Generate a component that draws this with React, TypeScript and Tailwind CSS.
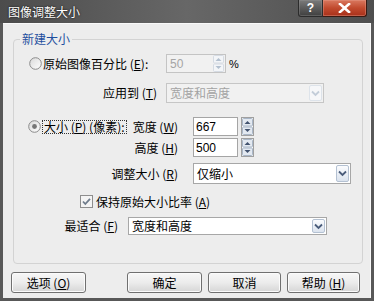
import React from "react";

const U = ({ c }: { c: string }) => (
  <span className="underline underline-offset-[1px] decoration-1">{c}</span>
);

function Radio({ checked = false }: { checked?: boolean }) {
  return (
    <svg width="13" height="13" viewBox="0 0 13 13" className="shrink-0">
      <defs>
        <linearGradient id={checked ? "rg1" : "rg0"} x1="0" y1="0" x2="1" y2="1">
          <stop offset="0" stopColor="#d9d9d9" />
          <stop offset="1" stopColor="#ffffff" />
        </linearGradient>
      </defs>
      <circle cx="6.5" cy="6.5" r="5.8" fill={`url(#${checked ? "rg1" : "rg0"})`} stroke="#8b8b8b" strokeWidth="1" />
      {checked && <circle cx="6.5" cy="6.5" r="2.4" fill="#767676" />}
    </svg>
  );
}

function Checkbox() {
  return (
    <svg width="13" height="13" viewBox="0 0 13 13" className="shrink-0">
      <rect x="0.5" y="0.5" width="12" height="12" fill="#f4f4f4" stroke="#8e8e8e" />
      <path d="M3 6.5 L5.3 9 L10 3.8" fill="none" stroke="#6f7c8c" strokeWidth="1.8" />
    </svg>
  );
}

function SpinArrows({ disabled = false }: { disabled?: boolean }) {
  const fill = disabled ? "#f3f5f8" : "#e3e9f1";
  const line = disabled ? "#d5dbe3" : "#a9b6c7";
  const arrow = disabled ? "#b3c0cf" : "#42536f";
  return (
    <svg width="11" height="17" viewBox="0 0 11 17" className="shrink-0">
      <rect x="0.5" y="0.5" width="10" height="7.5" rx="1" fill={fill} stroke={line} />
      <rect x="0.5" y="9" width="10" height="7.5" rx="1" fill={fill} stroke={line} />
      <path d="M2.5 6 L5.5 3 L8.5 6 Z" fill={arrow} />
      <path d="M2.5 11 L5.5 14 L8.5 11 Z" fill={arrow} />
    </svg>
  );
}

function DropArrow({ disabled = false }: { disabled?: boolean }) {
  return (
    <div
      className={`w-[13px] h-full shrink-0 border rounded-[2px] flex items-center justify-center ${
        disabled
          ? "border-[#dde3ea] bg-[#f6f7f9]"
          : "border-[#b4c1d2] bg-gradient-to-b from-[#fbfcfe] to-[#dbe3ee]"
      }`}
    >
      <svg width="9" height="7" viewBox="0 0 9 7">
        <path d="M1 1.5 L4.5 5 L8 1.5" fill="none" stroke={disabled ? "#c3cdd9" : "#4a5c7a"} strokeWidth="1.8" />
      </svg>
    </div>
  );
}

function Select({ text, width, height, disabled = false }: { text: string; width: string; height: string; disabled?: boolean }) {
  return (
    <div
      className={`${width} ${height} border flex items-stretch p-[1px] ${
        disabled ? "border-[#c6c6c6] bg-[#f1f1f1] text-[#a3a3a3]" : "border-[#a7a7a7] bg-white text-black"
      }`}
    >
      <span className="flex-1 pl-[2px] flex items-center whitespace-nowrap">{text}</span>
      <DropArrow disabled={disabled} />
    </div>
  );
}

function NumInput({ value }: { value: string }) {
  return (
    <div className="flex items-center gap-[3px]">
      <div className="w-[45px] h-[19px] border border-[#a5a5a5] bg-white flex items-center pl-[2px] font-['Liberation_Sans',sans-serif] text-[12px]">
        {value}
      </div>
      <div className="w-[13px] h-[19px] border border-[#a0a0a0] bg-white flex items-center justify-center">
        <SpinArrows />
      </div>
    </div>
  );
}

function Btn({ children, width }: { children: React.ReactNode; width: string }) {
  return (
    <div
      className={`${width} h-[21px] rounded-[3px] border border-[#707070] bg-gradient-to-b from-[#f7f7f7] via-[#ececec] to-[#d6d6d6] shadow-[inset_0_0_0_1px_#fbfbfb] flex items-center justify-center text-[12px] text-black whitespace-nowrap`}
    >
      {children}
    </div>
  );
}

export default function App() {
  return (
    <div className="w-[374px] h-[301px] bg-[#585858] flex flex-col font-['Noto_Sans_CJK_SC','Liberation_Sans',sans-serif] text-[12px] leading-[14px] text-black overflow-hidden">
      {/* Title bar */}
      <div className="h-[23px] flex bg-gradient-to-r from-[#4c4c4c] via-[#676767] to-[#4e4e4e]">
        <span className="pl-[8px] self-center text-white [text-shadow:0_0_2px_#000]">图像调整大小</span>
        <div className="ml-auto mr-[7px] flex items-start">
          <div className="w-[25px] h-[17px] rounded-bl-[3px] border border-t-0 border-[#2c2c2c] bg-gradient-to-b from-[#7b7b7b] to-[#3f3f3f] shadow-[inset_0_0_0_1px_#9a9a9a55] flex items-center justify-center text-white font-['Liberation_Sans',sans-serif] font-bold text-[12px]">
            ?
          </div>
          <div className="w-[44px] h-[17px] rounded-br-[3px] border border-t-0 border-l-0 border-[#3a1a12] bg-gradient-to-b from-[#d9785f] via-[#c14a2e] to-[#a8301a] shadow-[inset_0_0_0_1px_#e8a08e66] flex items-center justify-center">
            <svg width="13" height="10" viewBox="0 0 13 10">
              <path d="M2 1 L11 9 M11 1 L2 9" stroke="#ffffff" strokeWidth="2.6" strokeLinecap="square" />
            </svg>
          </div>
        </div>
      </div>

      {/* Body */}
      <div className="flex-1 mx-[3px] mb-[3px] bg-[#ededed] border-t border-r border-[#f9f9f9] flex flex-col whitespace-nowrap">
        {/* Group box */}
        <div className="relative mt-[15px] ml-[10px] mr-[7px] h-[225px] border border-[#d3d3d3] rounded-[4px] flex flex-col">
          <span className="absolute -top-[8px] left-[6px] px-[2px] bg-[#ededed] text-[#1f4f9f]">新建大小</span>

          {/* Original percent */}
          <div className="mt-[14px] h-[19px] flex items-center">
            <div className="w-[152px] pl-[15px] flex items-center gap-[1px]">
              <Radio />
              <span>
                原始图像百分比 (<U c="E" />):
              </span>
            </div>
            <div className="w-[60px] h-[19px] border border-[#c4c4c4] bg-[#f1f1f1] flex items-center pl-[3px] pr-[1px] text-[#a5a5a5] font-['Liberation_Sans',sans-serif]">
              <span className="flex-1">50</span>
              <SpinArrows disabled />
            </div>
            <span className="ml-[3px] font-['Liberation_Sans',sans-serif] text-[11px]">%</span>
          </div>

          {/* Apply to */}
          <div className="mt-[10px] h-[20px] flex items-center">
            <span className="w-[152px] pr-[9px] text-right">
              应用到 (<U c="T" />)
            </span>
            <Select text="宽度和高度" width="w-[158px]" height="h-[20px]" disabled />
          </div>

          {/* Size in pixels */}
          <div className="mt-[14px] h-[19px] flex items-center">
            <div className="w-[112px] pl-[14px] flex items-center gap-[1px]">
              <Radio checked />
              <span className="border border-dotted border-[#333] px-[1px] leading-[12px]">
                大小 (<U c="P" />) (像素):
              </span>
            </div>
            <span className="w-[52px] text-right">
              宽度 (<U c="W" />)
            </span>
            <div className="ml-[15px]">
              <NumInput value="667" />
            </div>
          </div>

          <div className="mt-[2px] h-[19px] flex items-center">
            <span className="ml-[112px] w-[52px] text-right">
              高度 (<U c="H" />)
            </span>
            <div className="ml-[15px]">
              <NumInput value="500" />
            </div>
          </div>

          {/* Resize */}
          <div className="mt-[6px] h-[21px] flex items-center">
            <span className="w-[164px] text-right">
              调整大小 (<U c="R" />)
            </span>
            <div className="ml-[15px]">
              <Select text="仅缩小" width="w-[158px]" height="h-[21px]" />
            </div>
          </div>

          {/* Keep ratio */}
          <div className="mt-[11px] h-[13px] flex items-center gap-[3px] pl-[66px]">
            <Checkbox />
            <span>
              保持原始大小比率 (<U c="A" />)
            </span>
          </div>

          {/* Best fit */}
          <div className="mt-[9px] h-[18px] flex items-center">
            <span className="w-[104px] text-right">
              最适合 (<U c="F" />)
            </span>
            <div className="ml-[10px]">
              <Select text="宽度和高度" width="w-[199px]" height="h-[18px]" />
            </div>
          </div>
        </div>

        {/* Buttons */}
        <div className="mt-[8px] flex items-center pl-[8px] pr-[10px]">
          <Btn width="w-[75px]">
            选项 (<U c="O" />)
          </Btn>
          <div className="ml-auto flex gap-[6px]">
            <Btn width="w-[75px]">确定</Btn>
            <Btn width="w-[73px]">取消</Btn>
            <Btn width="w-[73px]">
              帮助 (<U c="H" />)
            </Btn>
          </div>
        </div>
      </div>
    </div>
  );
}
